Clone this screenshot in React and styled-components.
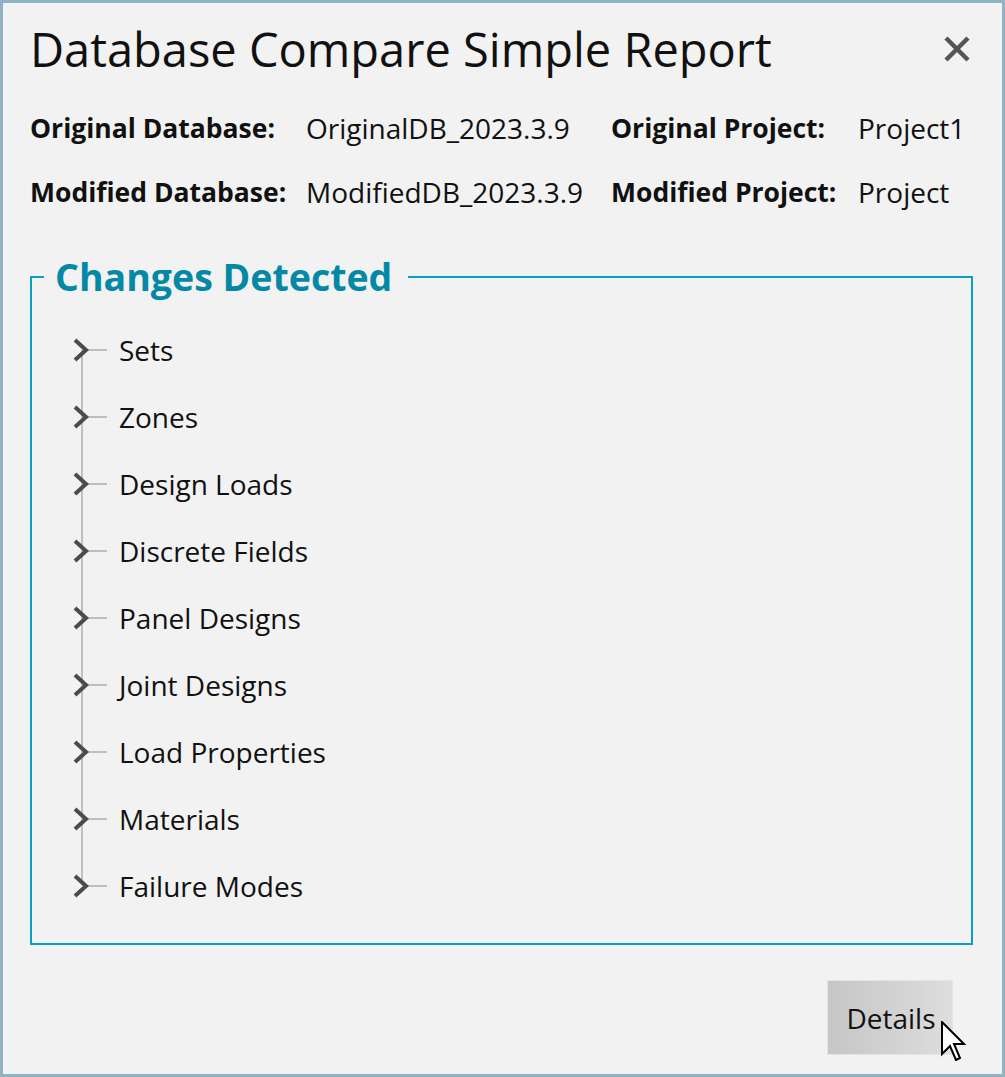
import React from 'react'
import styled, { createGlobalStyle } from 'styled-components'

const GlobalStyle = createGlobalStyle`
html, body {
margin: 0;
padding: 0;
background: #f2f2f2;
}
body {
font-family: "Open Sans", "Noto Sans", sans-serif;
color: #111;
}
`;

const Window = styled.div`
position: relative;
box-sizing: border-box;
width: 1005px;
height: 1077px;
border: 3px solid #8fb3c2;
background: #f2f2f2;
padding: 0 29px 0 27px;
display: flex;
flex-direction: column;
`;

const Header = styled.div`
display: flex;
justify-content: space-between;
align-items: center;
height: 92px;
`;

const Title = styled.h1`
margin: 0;
font-size: 47px;
font-weight: 400;
line-height: 60px;
color: #111;
`;

const CloseButton = styled.button`
border: none;
background: none;
padding: 0;
margin-right: 1px;
width: 30px;
height: 30px;
display: flex;
align-items: center;
justify-content: center;
cursor: pointer;
`;

const InfoGrid = styled.div`
display: grid;
grid-template-columns: 276px 305px 247px auto;
grid-auto-rows: 64px;
align-items: center;
margin-top: 1px;
`;

const Label = styled.span`
font-size: 26.5px;
font-weight: 700;
white-space: nowrap;
`;

const Value = styled.span`
font-size: 28px;
font-weight: 400;
white-space: nowrap;
`;

const Group = styled.fieldset`
margin: 31px 0 0 0;
padding: 17px 0 24px 0;
border: 2px solid #0aa0c4;
width: 943px;
box-sizing: border-box;
min-width: 0;
`;

const Legend = styled.legend`
margin-left: 12px;
padding: 0 16px 0 11px;
font-size: 37.5px;
font-weight: 700;
line-height: 44px;
color: #0388a6;
`;

const Tree = styled.ul`
position: relative;
list-style: none;
margin: 0;
padding: 0 0 0 41px;

&::before {
  content: "";
  position: absolute;
  left: 49px;
  top: 34px;
  bottom: 34px;
  width: 2px;
  background: #bfbfbf;
}
`;

const TreeItem = styled.li`
position: relative;
display: flex;
align-items: center;
height: 67px;
`;

const Expander = styled.span`
display: flex;
align-items: center;
width: 46px;
height: 26px;
flex-shrink: 0;
`;

const ItemText = styled.span`
font-size: 28px;
color: #111;
`;

const Footer = styled.div`
display: flex;
justify-content: flex-end;
padding: 35px 20px 0 0;
`;

const DetailsButton = styled.button`
position: relative;
width: 126px;
height: 75px;
border: 1px solid #e4e4e4;
background: linear-gradient(90deg, #c6c6c6 0%, #d6d6d6 70%, #dedede 100%);
font-family: "Open Sans", "Noto Sans", sans-serif;
font-size: 28px;
color: #111;
padding: 0 0 0 2px;
`;

const Cursor = styled.svg`
position: absolute;
left: 113px;
top: 40px;
pointer-events: none;
`;

const items = [
  'Sets',
  'Zones',
  'Design Loads',
  'Discrete Fields',
  'Panel Designs',
  'Joint Designs',
  'Load Properties',
  'Materials',
  'Failure Modes',
];

const Chevron = () => (
  <svg width="46" height="26" viewBox="0 0 46 26">
    <line x1="12" y1="13" x2="34" y2="13" stroke="#bfbfbf" strokeWidth="2" />
    <polyline points="2,3 13,13 2,23" fill="none" stroke="#4b4b4b" strokeWidth="4" />
  </svg>
);

const App = () => {
  return (
    <>
      <GlobalStyle />
      <Window>
        <Header>
          <Title>Database Compare Simple Report</Title>
          <CloseButton aria-label="Close">
            <svg width="26" height="26" viewBox="0 0 26 26">
              <path d="M2 2 L24 24 M24 2 L2 24" stroke="#555" strokeWidth="4.5" />
            </svg>
          </CloseButton>
        </Header>

        <InfoGrid>
          <Label>Original Database:</Label>
          <Value>OriginalDB_2023.3.9</Value>
          <Label>Original Project:</Label>
          <Value>Project1</Value>
          <Label>Modified Database:</Label>
          <Value>ModifiedDB_2023.3.9</Value>
          <Label>Modified Project:</Label>
          <Value>Project</Value>
        </InfoGrid>

        <Group>
          <Legend>Changes Detected</Legend>
          <Tree>
            {items.map((name) => (
              <TreeItem key={name}>
                <Expander>
                  <Chevron />
                </Expander>
                <ItemText>{name}</ItemText>
              </TreeItem>
            ))}
          </Tree>
        </Group>

        <Footer>
          <DetailsButton>
            Details
            <Cursor width="26" height="40" viewBox="0 0 13 20">
              <path
                d="M0.5 0.5 L0.5 16.5 L4.5 12.5 L7.5 19.5 L9.5 18.5 L6.5 11.5 L11.5 11.5 Z"
                fill="#fff"
                stroke="#000"
                strokeWidth="1"
                strokeLinejoin="miter"
              />
            </Cursor>
          </DetailsButton>
        </Footer>
      </Window>
    </>
  )
}

export default App
